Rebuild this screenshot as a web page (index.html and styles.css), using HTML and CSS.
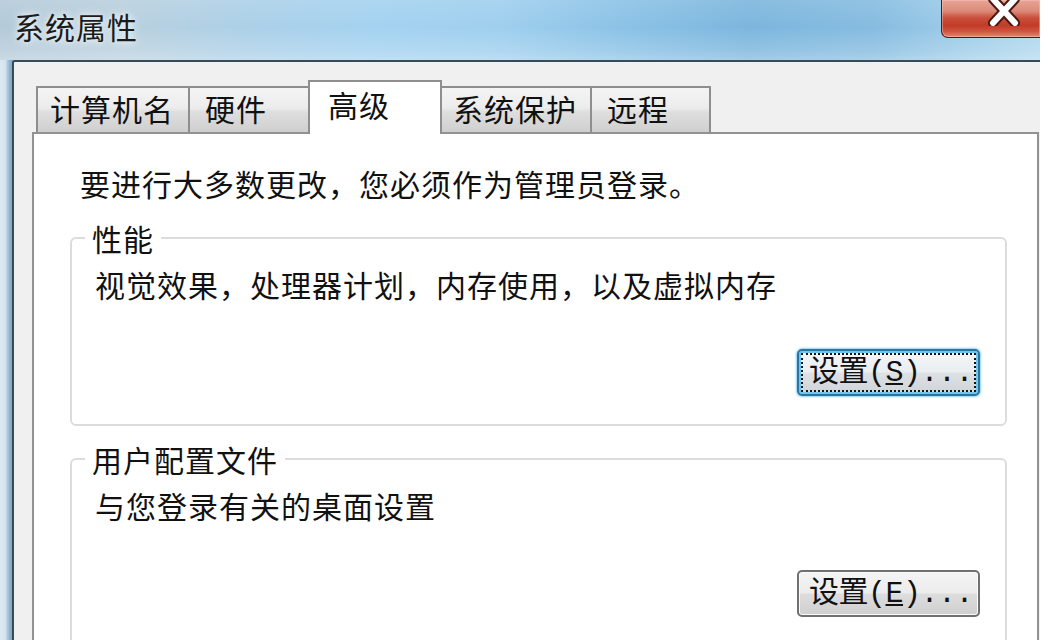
FILE: index.html
```html
<!DOCTYPE html>
<html lang="zh-CN">
<head>
<meta charset="utf-8">
<title>系统属性</title>
<link rel="stylesheet" href="styles.css">
</head>
<body>
<div class="window">
  <header class="titlebar">
    <span class="title">系统属性</span>
    <button class="close" aria-label="关闭">
      <svg width="34" height="28" viewBox="0 0 34 28">
        <path d="M6 1 L28 25 M28 1 L6 25" stroke="#4a1a12" stroke-width="10" stroke-linecap="round" fill="none"/>
        <path d="M6 1 L28 25 M28 1 L6 25" stroke="#ffffff" stroke-width="6" stroke-linecap="round" fill="none"/>
      </svg>
    </button>
  </header>
  <div class="client">
    <div class="tabs">
      <div class="tab t1">计算机名</div>
      <div class="tab t2">硬件</div>
      <div class="tab active">高级</div>
      <div class="tab t4">系统保护</div>
      <div class="tab t5">远程</div>
    </div>
    <div class="panel">
      <p class="note">要进行大多数更改，您必须作为管理员登录。</p>
      <fieldset class="group">
        <legend>性能</legend>
        <p class="desc">视觉效果，处理器计划，内存使用，以及虚拟内存</p>
        <div class="actions"><button class="btn focused">设置(<u>S</u>)...</button></div>
      </fieldset>
      <fieldset class="group g2">
        <legend>用户配置文件</legend>
        <p class="desc">与您登录有关的桌面设置</p>
        <div class="actions"><button class="btn">设置(<u>E</u>)...</button></div>
      </fieldset>
    </div>
  </div>
</div>
</body>
</html>
```

FILE: styles.css
```css
html, body {
  margin: 0;
  padding: 0;
  background: #ffffff;
  overflow: hidden;
}

body {
  width: 1048px;
  height: 640px;
  font-family: "Noto Sans CJK SC", "Noto Sans", sans-serif;
  font-size: 30px;
  color: #111;
}

.window {
  width: 1040px;
  height: 640px;
  display: flex;
  flex-direction: column;
  background: linear-gradient(90deg, #dde9f1 0, #d2e3ee 6px, #b0cbdf 7px, #8fb3cf 10px, #7aa3c3 12px, #7aa3c3 100%);
}

.titlebar {
  height: 60px;
  flex: none;
  display: flex;
  align-items: flex-start;
  padding-left: 14px;
  background:
    linear-gradient(180deg, rgba(255,255,255,0.10) 0%, rgba(255,255,255,0) 45%, rgba(255,255,255,0.18) 85%, rgba(255,255,255,0.30) 100%),
    linear-gradient(90deg, #b4cad9 0%, #b9d0de 12%, #acd0e8 24%, #a4d2f0 36%, #9fcfee 48%, #8bc2e6 60%, #7cb6dd 72%, #86bce0 84%, #a2cfea 94%, #b2d8ee 100%);
}

.title {
  padding-top: 8px;
  line-height: 36px;
  letter-spacing: 1px;
  color: #1b1b1b;
  text-shadow: 0 0 6px rgba(255,255,255,0.9), 0 0 12px rgba(255,255,255,0.6);
}

.close {
  margin-left: auto;
  width: 99px;
  height: 38px;
  padding: 0 0 0 45px;
  display: flex;
  align-items: flex-start;
  border: 1px solid #4b1d17;
  border-top: none;
  border-right: none;
  border-radius: 0 0 0 7px;
  background: linear-gradient(180deg, #e7a596 0%, #dd8a78 30%, #c9503d 48%, #c13b28 68%, #cf5540 85%, #e38a72 100%);
  box-shadow: inset 0 0 0 1px rgba(255,200,190,0.45);
}

.close svg {
  display: block;
  margin-top: -2px;
}

.client {
  flex: 1;
  margin-left: 12px;
  border-top: 2px solid #3a4b58;
  border-left: 2px solid #3a4b58;
  border-top-left-radius: 3px;
  background: #f0f0f0;
  padding: 18px 1px 0 18px;
  display: flex;
  flex-direction: column;
}

.tabs {
  display: flex;
  align-items: flex-end;
  margin-left: 4px;
  margin-bottom: -2px;
  position: relative;
  z-index: 1;
  letter-spacing: 1px;
}

.tab {
  box-sizing: border-box;
  height: 46px;
  margin-bottom: 2px;
  line-height: 40px;
  border: 2px solid #8e8e8e;
  border-bottom: none;
  background: linear-gradient(180deg, #f4f4f4 0%, #ececec 45%, #dedede 55%, #cfcfcf 100%);
  white-space: nowrap;
}

.tab + .tab {
  margin-left: -2px;
}

.t1 { width: 154px; padding-left: 12px; }
.t2 { width: 122px; padding-left: 15px; }
.t4 { width: 152px; padding-left: 11px; }
.t5 { width: 121px; padding-left: 15px; }

.tab.active {
  width: 134px;
  height: 54px;
  margin-bottom: 0;
  padding-left: 18px;
  line-height: 44px;
  background: #ffffff;
  position: relative;
  z-index: 2;
}

.panel {
  flex: 1;
  background: #ffffff;
  border: 2px solid #929292;
  border-bottom: none;
  padding: 31px 30px 0 36px;
}

.note {
  margin: 0;
  padding-left: 10px;
  line-height: 36px;
  letter-spacing: 1px;
}

.group {
  margin: 22px 0 0;
  border: 2px solid #dcdcdc;
  border-radius: 6px;
  padding: 13px 25px 28px 23px;
  min-width: 0;
}

.group.g2 {
  margin-top: 18px;
}

.group legend {
  margin-left: -10px;
  padding: 0 7px;
  line-height: 30px;
  letter-spacing: 1px;
}

.desc {
  margin: 0;
  line-height: 36px;
  letter-spacing: 1px;
}

.actions {
  display: flex;
  justify-content: flex-end;
  margin-top: 47px;
}

.btn {
  box-sizing: border-box;
  width: 183px;
  height: 47px;
  padding: 0 0 0 10px;
  text-align: left;
  white-space: nowrap;
  overflow: hidden;
  font-family: "Liberation Mono", "Noto Sans CJK SC", monospace;
  font-size: 30px;
  letter-spacing: -0.5px;
  line-height: 40px;
  color: #111;
  border: 2px solid #707070;
  border-radius: 5px;
  background: linear-gradient(180deg, #f4f4f4 0%, #ececec 48%, #dddddd 52%, #cfcfcf 100%);
  box-shadow: inset 0 0 0 1px #fbfbfb;
}

.btn u {
  text-decoration-thickness: 2px;
  text-underline-offset: 2px;
}

.btn.focused {
  border-color: #2c739f;
  box-shadow: inset 0 0 0 2px #6fc6ec, 0 0 2px 1px #8fd0ee;
  background: linear-gradient(180deg, #f2f7fa 0%, #eaeef1 48%, #dde1e4 52%, #cfd4d8 100%);
  outline: 2px dotted #111;
  outline-offset: -6px;
}
```
